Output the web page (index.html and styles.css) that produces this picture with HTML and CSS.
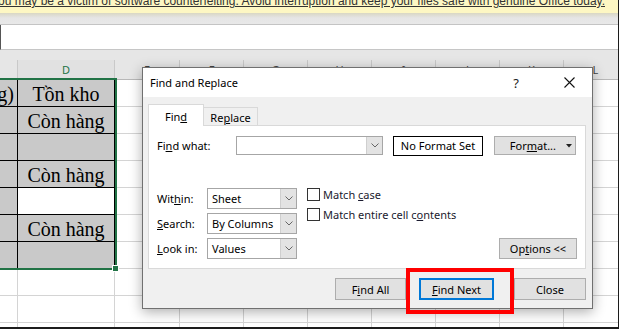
FILE: index.html
```html
<!DOCTYPE html>
<html>
<head>
<meta charset="utf-8">
<link rel="stylesheet" href="styles.css">
</head>
<body>
<div class="app">
  <div class="notice"><span class="notice-text">Your license isn't genuine, and you may be a victim of software counterfeiting. Avoid interruption and keep your files safe with genuine Office today.</span></div>
  <div class="ribbon-edge"></div>
  <div class="formula-bar"></div>
  <div class="sheet-gap"></div>
  <div class="sheet">
    <div class="hd"></div><div class="hd sel">D</div><div class="hd">E</div><div class="hd">F</div><div class="hd">G</div><div class="hd">H</div><div class="hd">I</div><div class="hd">J</div><div class="hd">K</div><div class="hd">L</div>

    <div class="t cut"><span>ng)</span></div><div class="t">Tồn kho</div><div class="c"></div><div class="c"></div><div class="c"></div><div class="c"></div><div class="c"></div><div class="c"></div><div class="c"></div><div class="c"></div>
    <div class="t"></div><div class="t">Còn hàng</div><div class="c"></div><div class="c"></div><div class="c"></div><div class="c"></div><div class="c"></div><div class="c"></div><div class="c"></div><div class="c"></div>
    <div class="t"></div><div class="t"></div><div class="c"></div><div class="c"></div><div class="c"></div><div class="c"></div><div class="c"></div><div class="c"></div><div class="c"></div><div class="c"></div>
    <div class="t"></div><div class="t">Còn hàng</div><div class="c"></div><div class="c"></div><div class="c"></div><div class="c"></div><div class="c"></div><div class="c"></div><div class="c"></div><div class="c"></div>
    <div class="t"></div><div class="t w"></div><div class="c"></div><div class="c"></div><div class="c"></div><div class="c"></div><div class="c"></div><div class="c"></div><div class="c"></div><div class="c"></div>
    <div class="t"></div><div class="t">Còn hàng</div><div class="c"></div><div class="c"></div><div class="c"></div><div class="c"></div><div class="c"></div><div class="c"></div><div class="c"></div><div class="c"></div>
    <div class="t"></div><div class="t"></div><div class="c"></div><div class="c"></div><div class="c"></div><div class="c"></div><div class="c"></div><div class="c"></div><div class="c"></div><div class="c"></div>
    <div class="c"></div><div class="c"></div><div class="c"></div><div class="c"></div><div class="c"></div><div class="c"></div><div class="c"></div><div class="c"></div><div class="c"></div><div class="c"></div>
    <div class="c"></div><div class="c"></div><div class="c"></div><div class="c"></div><div class="c"></div><div class="c"></div><div class="c"></div><div class="c"></div><div class="c"></div><div class="c"></div>
    <div class="c"></div><div class="c"></div><div class="c"></div><div class="c"></div><div class="c"></div><div class="c"></div><div class="c"></div><div class="c"></div><div class="c"></div><div class="c"></div>
  </div>

  <div class="selection"><span class="fill-handle"></span></div>

  <div class="dialog">
    <div class="dlg-title">
      <span class="dlg-title-text">Find and Replace</span>
      <span class="dlg-help">?</span>
      <span class="dlg-close"><svg width="11" height="11" viewBox="0 0 11 11"><path d="M0.5 0.5 L10.5 10.5 M10.5 0.5 L0.5 10.5" stroke="#111" stroke-width="1.1" fill="none"/></svg></span>
    </div>
    <div class="dlg-body">
      <div class="tabs">
        <div class="tab active">Fin<u>d</u></div>
        <div class="tab">Re<u>p</u>lace</div>
      </div>
      <div class="panel">
        <div class="row1">
          <span class="lbl lbl-find">Fi<u>n</u>d what:</span>
          <div class="combo combo-find"><span class="combo-val"></span><span class="combo-btn"><svg width="8" height="5" viewBox="0 0 8 5"><path d="M0.5 0.5 L4 4 L7.5 0.5" stroke="#666" stroke-width="1" fill="none"/></svg></span></div>
          <div class="nfs">No Format Set</div>
          <div class="btn btn-format"><span>For<u>m</u>at...</span><svg class="caret" width="6" height="4" viewBox="0 0 6 4"><path d="M0 0 L6 0 L3 3.5 Z" fill="#222"/></svg></div>
        </div>
        <div class="row2">
          <div class="opts">
            <div class="opt"><span class="lbl lbl-opt">Wit<u>h</u>in:</span><div class="combo combo-sm"><span class="combo-val">Sheet</span><span class="combo-btn"><svg width="8" height="5" viewBox="0 0 8 5"><path d="M0.5 0.5 L4 4 L7.5 0.5" stroke="#666" stroke-width="1" fill="none"/></svg></span></div></div>
            <div class="opt"><span class="lbl lbl-opt"><u>S</u>earch:</span><div class="combo combo-sm"><span class="combo-val">By Columns</span><span class="combo-btn"><svg width="8" height="5" viewBox="0 0 8 5"><path d="M0.5 0.5 L4 4 L7.5 0.5" stroke="#666" stroke-width="1" fill="none"/></svg></span></div></div>
            <div class="opt"><span class="lbl lbl-opt"><u>L</u>ook in:</span><div class="combo combo-sm"><span class="combo-val">Values</span><span class="combo-btn"><svg width="8" height="5" viewBox="0 0 8 5"><path d="M0.5 0.5 L4 4 L7.5 0.5" stroke="#666" stroke-width="1" fill="none"/></svg></span></div></div>
          </div>
          <div class="checks">
            <div class="chk"><span class="box"></span><span>Match <u>c</u>ase</span></div>
            <div class="chk"><span class="box"></span><span>Match entire cell c<u>o</u>ntents</span></div>
          </div>
          <div class="btn btn-options">Op<u>t</u>ions &lt;&lt;</div>
        </div>
      </div>
      <div class="actions">
        <div class="btn btn-all">F<u>i</u>nd All</div>
        <div class="btn btn-next"><u>F</u>ind Next</div>
        <div class="btn btn-close">Close</div>
      </div>
    </div>
  </div>

  <div class="highlight"></div>
</div>
</body>
</html>
```

FILE: styles.css
```css
* { box-sizing: border-box; }
html, body { margin: 0; padding: 0; }
body {
  width: 619px;
  height: 329px;
  overflow: hidden;
  background: #1c1c1c;
  font-family: "Noto Sans", "Open Sans", sans-serif;
}
u { text-decoration: underline; text-underline-offset: 1px; }

.app {
  position: relative;
  width: 618px;
  height: 327px;
  overflow: hidden;
  background: #fff;
}

.notice {
  height: 13px;
  background: #fdf7c3;
  display: flex;
  justify-content: flex-end;
  overflow: hidden;
  padding-right: 13px;
  white-space: nowrap;
}
.notice-text {
  flex-shrink: 0;
  font-family: "Liberation Sans", Arial, sans-serif;
  font-size: 12px;
  line-height: 12px;
  margin-top: -5px;
  color: #333;
  text-decoration: underline;
}
.ribbon-edge {
  height: 12px;
  background: linear-gradient(#d9d7c4, #e5e5e5 45%, #e8e8e8);
  border-bottom: 1px solid #c4c4c4;
}
.formula-bar {
  height: 25px;
  background: #fff;
  border-left: 1px solid #555;
  border-bottom: 1px solid #c6c6c6;
}
.sheet-gap {
  height: 10px;
  background: #e6e6e6;
}

.sheet {
  display: grid;
  grid-template-columns: 18px 97px 65px repeat(7, 64px);
  grid-template-rows: 20px repeat(10, 27px);
}
.hd {
  background: #e6e6e6;
  border-right: 1px solid #c9c9c9;
  border-bottom: 1px solid #b8b8b8;
  font-size: 11px;
  line-height: 19px;
  text-align: center;
  color: #444;
}
.hd.sel { color: #217346; background: #e1e1e1; }
.c {
  border-right: 1px solid #d4d4d4;
  border-bottom: 1px solid #d4d4d4;
}
.t {
  background: #c9c9c9;
  border-right: 1px solid #000;
  border-bottom: 1px solid #000;
  font-family: "Liberation Serif", "Times New Roman", serif;
  font-size: 20px;
  line-height: 26px;
  padding-top: 1px;
  text-align: center;
  color: #000;
  overflow: hidden;
  white-space: nowrap;
}
.t.w { background: #fff; }
.t.cut {
  display: flex;
  justify-content: flex-end;
  padding-right: 3px;
}

.selection {
  position: absolute;
  left: -2px;
  top: 78px;
  width: 119px;
  height: 192px;
  border: 2px solid #217346;
}
.fill-handle {
  position: absolute;
  right: -4px;
  bottom: -4px;
  width: 7px;
  height: 7px;
  background: #217346;
  border: 1px solid #fff;
}

.dialog {
  position: absolute;
  left: 142px;
  top: 67px;
  width: 451px;
  height: 242px;
  border: 1px solid #707070;
  background: #f0f0f0;
  box-shadow: 0 3px 12px rgba(0, 0, 0, 0.32);
  font-size: 11px;
  color: #000;
  display: flex;
  flex-direction: column;
}
.dlg-title {
  height: 29px;
  background: #fff;
  display: flex;
  align-items: center;
  padding-left: 7px;
}
.dlg-title-text { font-size: 11px; }
.dlg-help {
  margin-left: auto;
  width: 30px;
  margin-right: 15px;
  text-align: center;
  font-size: 13px;
  color: #222;
}
.dlg-close {
  width: 46px;
  height: 29px;
  display: flex;
  align-items: center;
  justify-content: center;
}
.dlg-body {
  flex: 1;
  padding: 7px 6px 0 5px;
}

.tabs {
  display: flex;
  align-items: flex-end;
  height: 21px;
}
.tab {
  display: flex;
  justify-content: center;
  align-items: center;
  border: 1px solid #d9d9d9;
  border-bottom: none;
}
.tab.active {
  position: relative;
  z-index: 1;
  width: 56px;
  height: 22px;
  margin-bottom: -1px;
  background: #fff;
  padding-top: 2px;
}
.tab:not(.active) {
  width: 54px;
  height: 18px;
  border-left: none;
  padding-top: 2px;
}

.panel {
  background: #fff;
  border: 1px solid #d9d9d9;
  padding: 10px 8px 9px 8px;
}
.row1 {
  display: flex;
  align-items: center;
  height: 19px;
}
.lbl-find { width: 79px; }
.combo {
  display: flex;
  align-items: stretch;
  border: 1px solid #a6a6a6;
  background: #fff;
}
.combo-val {
  flex: 1;
  padding-left: 4px;
  display: flex;
  align-items: center;
}
.combo-btn {
  width: 16px;
  background: #e3e3e3;
  border-left: 1px solid #cfcfcf;
  display: flex;
  align-items: center;
  justify-content: center;
}
.combo-find { width: 147px; height: 19px; }
.nfs {
  margin-left: 10px;
  width: 90px;
  height: 20px;
  border: 1px solid #000;
  background: #fff;
  display: flex;
  align-items: center;
  justify-content: center;
}
.btn {
  background: #e1e1e1;
  border: 1px solid #adadad;
  display: flex;
  align-items: center;
  justify-content: center;
}
.btn-format {
  margin-left: 11px;
  width: 82px;
  height: 19px;
  justify-content: flex-end;
  padding-right: 3px;
  gap: 10px;
}
.caret { margin-top: 1px; }

.row2 {
  display: flex;
  margin-top: 33px;
  align-items: flex-start;
}
.opts {
  display: flex;
  flex-direction: column;
  gap: 4px;
}
.opt {
  display: flex;
  align-items: center;
  height: 21px;
}
.lbl-opt { width: 50px; }
.combo-sm { width: 90px; height: 21px; }

.checks {
  margin-left: 10px;
  display: flex;
  flex-direction: column;
  gap: 7px;
}
.chk {
  display: flex;
  align-items: center;
  height: 13px;
  color: #1a1a2e;
}
.box {
  width: 13px;
  height: 13px;
  border: 1px solid #333;
  background: #fff;
  margin-right: 3px;
}
.btn-options {
  margin-left: auto;
  align-self: flex-end;
  width: 78px;
  height: 21px;
}

.actions {
  display: flex;
  justify-content: flex-end;
  margin-top: 9px;
}
.actions .btn { height: 22px; }
.btn-all { width: 71px; margin-right: 13px; }
.btn-next { width: 75px; margin-right: 20px; border: 2px solid #0078d7; }
.btn-close { width: 72px; }

.highlight {
  position: absolute;
  left: 406px;
  top: 268px;
  width: 108px;
  height: 46px;
  border: 4px solid #ff0000;
}
```
